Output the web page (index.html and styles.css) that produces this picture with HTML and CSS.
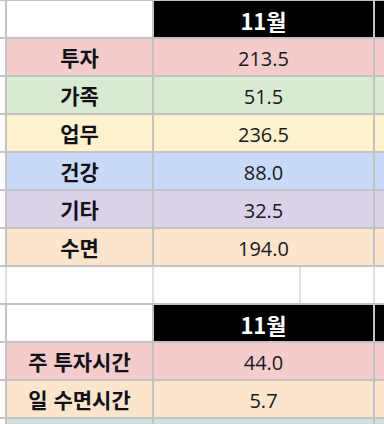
FILE: index.html
```html
<!DOCTYPE html>
<html lang="ko">
<head>
<meta charset="utf-8">
<link rel="stylesheet" href="styles.css">
</head>
<body>
<div class="sheet">
  <div class="row">
    <div class="strip"></div>
    <div class="cell blank"></div>
    <div class="cell head span">11월</div>
    <div class="cell head"></div>
  </div>
  <div class="row pink">
    <div class="strip"></div>
    <div class="cell label">투자</div>
    <div class="cell num span">213.5</div>
    <div class="cell"></div>
  </div>
  <div class="row green">
    <div class="strip"></div>
    <div class="cell label">가족</div>
    <div class="cell num span">51.5</div>
    <div class="cell"></div>
  </div>
  <div class="row yellow">
    <div class="strip"></div>
    <div class="cell label">업무</div>
    <div class="cell num span">236.5</div>
    <div class="cell"></div>
  </div>
  <div class="row blue">
    <div class="strip"></div>
    <div class="cell label">건강</div>
    <div class="cell num span">88.0</div>
    <div class="cell"></div>
  </div>
  <div class="row purple">
    <div class="strip"></div>
    <div class="cell label">기타</div>
    <div class="cell num span">32.5</div>
    <div class="cell"></div>
  </div>
  <div class="row orange">
    <div class="strip"></div>
    <div class="cell label">수면</div>
    <div class="cell num span">194.0</div>
    <div class="cell"></div>
  </div>
  <div class="row empty">
    <div class="strip"></div>
    <div class="cell blank"></div>
    <div class="cell blank"></div>
    <div class="cell blank"></div>
    <div class="cell blank"></div>
  </div>
  <div class="row">
    <div class="strip"></div>
    <div class="cell blank"></div>
    <div class="cell head span">11월</div>
    <div class="cell head"></div>
  </div>
  <div class="row pink">
    <div class="strip"></div>
    <div class="cell label">주 투자시간</div>
    <div class="cell num span">44.0</div>
    <div class="cell"></div>
  </div>
  <div class="row orange">
    <div class="strip"></div>
    <div class="cell label">일 수면시간</div>
    <div class="cell num span">5.7</div>
    <div class="cell"></div>
  </div>
  <div class="row cyan">
    <div class="strip"></div>
    <div class="cell"></div>
    <div class="cell span"></div>
    <div class="cell"></div>
  </div>
</div>
</body>
</html>
```

FILE: styles.css
```css
html, body {
  margin: 0;
  padding: 0;
  background: #ffffff;
  overflow: hidden;
}

.sheet {
  display: flex;
  flex-direction: column;
  gap: 2px;
  padding-top: 1px;
  background: #c3c3c3;
  width: 384px;
  height: 424px;
  overflow: hidden;
}

.row {
  display: grid;
  grid-template-columns: 5px 145px 145px 72px 1fr;
  column-gap: 2px;
  height: 36px;
  flex: 0 0 36px;
  background: #c3c3c3;
}

.row.empty {
  background: #e1e1e1;
}

.strip {
  background: #ffffff;
}

.cell {
  display: flex;
  align-items: center;
  justify-content: center;
  min-width: 0;
}

.span {
  grid-column: span 2;
}

.blank {
  background: #ffffff;
}

.head {
  background: #000000;
  color: #ffffff;
  font-family: "Noto Sans CJK KR", "Noto Sans", sans-serif;
  font-weight: 700;
  font-size: 22px;
  padding-top: 1px;
}

.label {
  font-family: "Noto Sans CJK KR", sans-serif;
  font-weight: 700;
  font-size: 21px;
  color: #111118;
}

.num {
  font-family: "Open Sans", "Noto Sans", sans-serif;
  font-size: 20px;
  color: #18181e;
  padding-top: 2px;
}

.pink .cell { background: #f4cccc; }
.green .cell { background: #d9ead3; }
.yellow .cell { background: #fff2cc; }
.blue .cell { background: #c9daf8; }
.purple .cell { background: #d9d2e9; }
.orange .cell { background: #fce5cd; }
.cyan .cell { background: #d0e0e3; }
```
